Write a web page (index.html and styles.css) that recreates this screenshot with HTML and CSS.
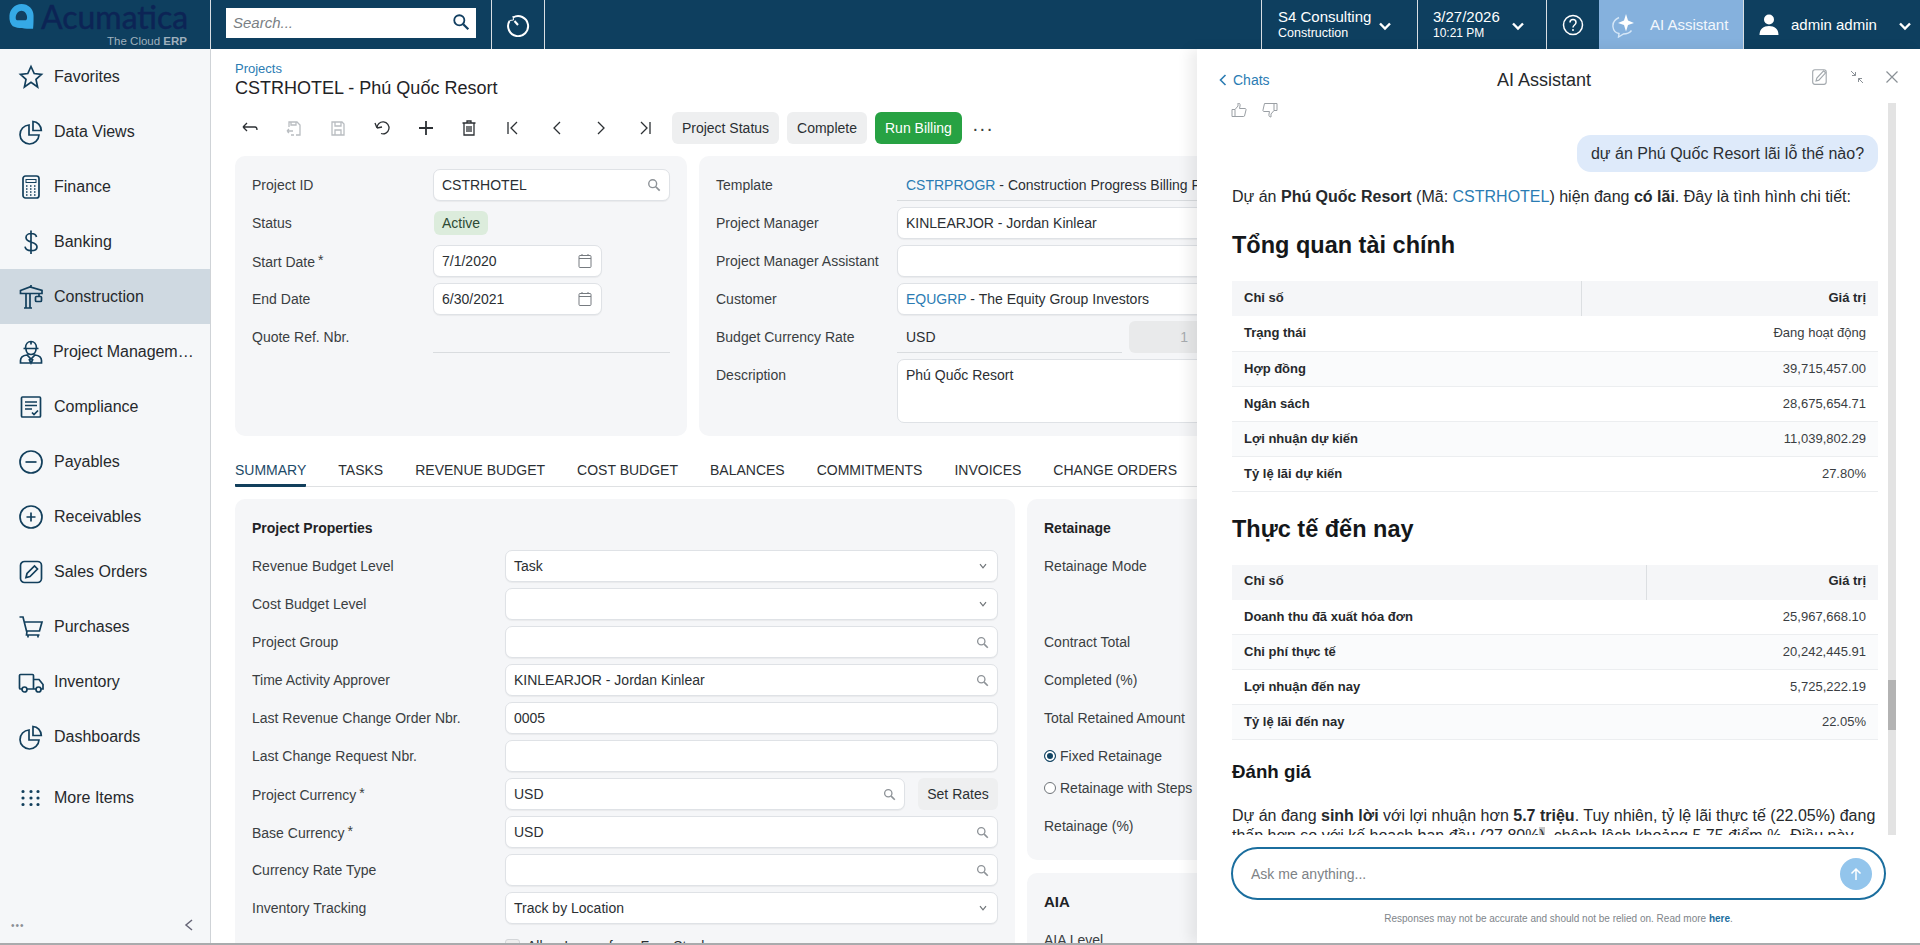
FILE: index.html
```html
<!DOCTYPE html>
<html lang="vi">
<head>
<meta charset="utf-8">
<title>CSTRHOTEL - Phú Quốc Resort</title>
<link rel="stylesheet" href="styles.css">
</head>
<body>
<svg class="defs" width="0" height="0" aria-hidden="true">
  <symbol id="mag" viewBox="0 0 16 16"><circle cx="6.5" cy="6.5" r="4.5" fill="none" stroke="currentColor" stroke-width="1.6"/><path d="M10 10l4.5 4.5" stroke="currentColor" stroke-width="2" fill="none"/></symbol>
  <symbol id="chev" viewBox="0 0 16 16"><path d="M3 5.5l5 5 5-5" fill="none" stroke="currentColor" stroke-width="2.4"/></symbol>
  <symbol id="small-chev" viewBox="0 0 10 10"><path d="M2.500 3.500l2.500 3 2.500-3" fill="none" stroke="currentColor" stroke-width="1"/></symbol>
  <symbol id="cal" viewBox="0 0 16 16"><rect x="2" y="2.5" width="12" height="12" rx="1" fill="none" stroke="currentColor"/><path d="M2 5.5h12M5 1v2M11 1v2" stroke="currentColor" fill="none"/></symbol>
</svg>
<div class="app">
  <header class="topbar">
    <div class="logo">
      <svg class="logo-mark" viewBox="0 0 28 28"><path d="M14 1C7 1 2 6.500 1.500 13c-.4 5 1 9 3.500 11 6 2.500 12 2.500 21 2.800 .6-6 .5-10 .5-13.800C26.500 6 21 1 14 1z" fill="#35a9e6"/><path d="M14 8c-3 0-5.500 3-6 6.500-.2 2 .4 3 1.500 3.500h9c1-.6 1.500-2 1.200-4C19.500 11 17 8 14 8z" fill="#123f61"/></svg>
      <div class="logo-text">
        <div class="logo-name">Acumatica</div>
        <div class="logo-sub">The Cloud <b>ERP</b></div>
      </div>
    </div>
    <div class="search-wrap">
      <div class="search"><span class="search-ph">Search...</span><svg class="search-ic"><use href="#mag"/></svg></div>
    </div>
    <div class="tb-cell tb-clock">
      <svg width="24" height="24" viewBox="0 0 24 24" fill="none" stroke="#fff" stroke-width="2"><path d="M7 4.500A10 10 0 1 1 3.500 8"/><path d="M7 3l.5 4-4 .5" stroke-width="1"/><path d="M12 12L8.500 8" stroke-width="2"/></svg>
    </div>
    <div class="tb-fill"></div>
    <div class="tb-cell tb-company">
      <div class="two-line"><div class="l1">S4 Consulting</div><div class="l2">Construction</div></div>
      <svg class="tb-chev"><use href="#chev"/></svg>
    </div>
    <div class="tb-cell tb-date">
      <div class="two-line"><div class="l1">3/27/2026</div><div class="l2">10:21 PM</div></div>
      <svg class="tb-chev"><use href="#chev"/></svg>
    </div>
    <div class="tb-cell tb-help">
      <svg width="22" height="22" viewBox="0 0 22 22" fill="none" stroke="#fff"><circle cx="11" cy="11" r="9.500" stroke-width="1.500"/><path d="M8 8.500c0-4 6-4 6 0 0 2.500-3 2.500-3 5" stroke-width="1.500"/><circle cx="11" cy="16" r=".6" fill="#fff"/></svg>
    </div>
    <div class="tb-cell tb-ai">
      <svg width="26" height="26" viewBox="0 0 26 26" fill="none"><path d="M8 5.500C3.500 7.500 1.500 11 2 15c.5 4 3 6 6 6.500l-.5 3.500 5-3c3 0 6-1 8-3.500" stroke="#d6e7f7" stroke-width="1.400"/><path d="M15 2l2 6.500L23 11l-6 2-2 6.500-2-6.500-6-2 6-2.500z" fill="#fff"/></svg>
      <span>AI Assistant</span>
    </div>
    <div class="tb-cell tb-user">
      <svg width="24" height="24" viewBox="0 0 24 24" fill="#fff"><circle cx="12" cy="6.500" r="5"/><path d="M2.500 22c0-6 4-9 9.500-9s9.500 3 9.500 9z"/></svg>
      <span class="user-name">admin admin</span>
      <svg class="tb-chev"><use href="#chev"/></svg>
    </div>
  </header>

  <div class="body">
    <nav class="sidebar">
      <a class="nav"><svg class="nic" viewBox="0 0 26 26"><path d="M13 2.500l3.200 7 7.300.8-5.500 5 1.600 7.700L13 18.200 6.400 23l1.600-7.700-5.500-5 7.300-.8z"/></svg><span>Favorites</span></a>
      <a class="nav"><svg class="nic" viewBox="0 0 26 26"><path d="M11 6A9.500 9.500 0 1 0 21 16H11z"/><path d="M15 2.500c4.500.3 8 3.800 8.300 9H15z"/></svg><span>Data Views</span></a>
      <a class="nav"><svg class="nic" viewBox="0 0 26 26"><rect x="5" y="2" width="16" height="22" rx="2.500"/><rect x="8" y="5.500" width="10" height="3" stroke-width="1"/><path class="dots" d="M8 12h1.500M12 12h1.500M16 12h1.500M8 15h1.500M12 15h1.500M16 15h1.500M8 18h1.500M12 18h1.500M16 18h1.500M8 21h1.500M12 21h1.500M16 21h1.500"/></svg><span>Finance</span></a>
      <a class="nav"><svg class="nic" viewBox="0 0 26 26"><path d="M18.500 8c-.5-2.500-3-3.500-5.500-3.500S8 6 8 8.500c0 6 11 3.500 11 9.500 0 2.500-3 3.700-6 3.700s-5.500-1.500-6-4M13 1.500v23.500"/></svg><span>Banking</span></a>
      <a class="nav active"><svg class="nic" viewBox="0 0 26 26"><path d="M2.500 6.500L12 3l12 3.500v3h-21.500zM8 9.500v14M12 9.500v14M6 24h8M13 3V1M21 9.500v3"/><rect x="17.500" y="12.500" width="6" height="5" rx="1"/></svg><span>Construction</span></a>
      <a class="nav"><svg class="nic" viewBox="0 0 26 26"><path d="M7.500 9c0-4 2.500-6.500 5.500-6.500S18.500 5 18.500 9M5.500 9.500h15M8 10c0 3 2 5.500 5 5.500s5-2.500 5-5.500M2.500 24v-2.500c0-3 3-5 6.500-5.500l4 4 4-4c3.500.5 6.500 2.500 6.500 5.500V24zM13 2.500v3M11 20l2 4 2-4"/></svg><span class="nav-clip">Project Managem…</span></a>
      <a class="nav"><svg class="nic" viewBox="0 0 26 26"><rect x="3.500" y="3" width="19" height="20" rx="1"/><path d="M7 8h12M7 11.500h12M7 15h7M14 18.500l2 2 4-4"/></svg><span>Compliance</span></a>
      <a class="nav"><svg class="nic" viewBox="0 0 26 26"><circle cx="13" cy="13" r="11"/><path d="M7.500 13h11"/></svg><span>Payables</span></a>
      <a class="nav"><svg class="nic" viewBox="0 0 26 26"><circle cx="13" cy="13" r="11"/><path d="M8.500 13h9M13 8.500v9"/></svg><span>Receivables</span></a>
      <a class="nav"><svg class="nic" viewBox="0 0 26 26"><rect x="2.500" y="2.500" width="21" height="21" rx="4"/><path d="M8 18.500l1-4 7.500-7.500 3 3-7.500 7.500z"/></svg><span>Sales Orders</span></a>
      <a class="nav"><svg class="nic" viewBox="0 0 26 26"><path d="M1.500 3H5l3.500 14h13L24 8H7M9 17l-.5 4h13M10 21v2.500M20 21v2.500"/></svg><span>Purchases</span></a>
      <a class="nav"><svg class="nic" viewBox="0 0 26 26"><path d="M4 20H2.500c-.6 0-1-.5-1-1V6.500c0-.6.4-1 1-1h12c.6 0 1 .4 1 1V20H9M15.500 10.500H21l4 5V20h-2M18 20h-2.500"/><circle cx="6.500" cy="20.500" r="2.500"/><circle cx="20.500" cy="20.500" r="2.500"/></svg><span>Inventory</span></a>
      <a class="nav"><svg class="nic" viewBox="0 0 26 26"><path d="M11 6A9.500 9.500 0 1 0 21 16H11z"/><path d="M15 2.500c4.500.3 8 3.800 8.300 9H15z"/></svg><span>Dashboards</span></a>
      <a class="nav nav-more"><svg class="nic" viewBox="0 0 26 26"><path class="gdots" d="M5 6.500h.01M13 6.500h.01M20 6.500h.01M5 13h.01M13 13h.01M20 13h.01M5 19.500h.01M13 19.500h.01M20 19.500h.01"/></svg><span>More Items</span></a>
      <div class="side-foot">
        <span class="side-dots">•••</span>
        <svg width="12" height="12" viewBox="0 0 12 12" fill="none" stroke="#667" stroke-width="1.500"><path d="M9 1L3 6l6 5"/></svg>
      </div>
    </nav>

    <main class="content">
      <div class="crumb">Projects</div>
      <h1 class="title">CSTRHOTEL - Phú Quốc Resort</h1>
      <div class="toolbar">
        <button class="ti"><svg viewBox="0 0 18 18"><path d="M2 8h12c1 0 2 1 2 3M2 8l4-4M2 8l4 4"/></svg></button>
        <button class="ti off"><svg viewBox="0 0 18 18"><path d="M4 8V3h8l3 3v10h-4M6 3v3h5V3M2 12h6M2 12l2-2M2 12l2 2M6 16h3"/></svg></button>
        <button class="ti off"><svg viewBox="0 0 18 18"><path d="M3 3h10l2 2v11H3zM6 3v4h6V3M6 16v-5h6v5"/></svg></button>
        <button class="ti"><svg viewBox="0 0 18 18"><path d="M4 9a6 6 0 1 1 4 5.500M4 9L2 4M4 9l5-1"/></svg></button>
        <button class="ti strong"><svg viewBox="0 0 18 18"><path d="M9 2v14M2 9h14"/></svg></button>
        <button class="ti"><svg viewBox="0 0 18 18"><path d="M2.500 4h13M7 4V2h4v2M4 4v12h10V4M7 7v6M9 7v6M11 7v6"/></svg></button>
        <button class="ti"><svg viewBox="0 0 18 18"><path d="M4 3v12M13 3L7 9l6 6"/></svg></button>
        <button class="ti"><svg viewBox="0 0 18 18"><path d="M12 3L6 9l6 6"/></svg></button>
        <button class="ti"><svg viewBox="0 0 18 18"><path d="M6 3l6 6-6 6"/></svg></button>
        <button class="ti"><svg viewBox="0 0 18 18"><path d="M14 3v12M5 3l6 6-6 6"/></svg></button>
        <button class="btn">Project Status</button>
        <button class="btn">Complete</button>
        <button class="btn green">Run Billing</button>
        <span class="more">···</span>
      </div>

      <div class="top-cards">
        <section class="card card-a">
          <div class="row"><label>Project ID</label><div class="field w-full"><span>CSTRHOTEL</span><svg class="ic-mag"><use href="#mag"/></svg></div></div>
          <div class="row"><label>Status</label><span class="badge">Active</span></div>
          <div class="row"><label>Start Date <i>*</i></label><div class="field w-date"><span>7/1/2020</span><svg class="ic-cal"><use href="#cal"/></svg></div></div>
          <div class="row"><label>End Date</label><div class="field w-date"><span>6/30/2021</span><svg class="ic-cal"><use href="#cal"/></svg></div></div>
          <div class="row"><label>Quote Ref. Nbr.</label><div class="line w-full"></div></div>
        </section>
        <section class="card card-b">
          <div class="row"><label>Template</label><div class="line grow"><a>CSTRPROGR</a>&nbsp;- Construction Progress Billing Project Template</div></div>
          <div class="row"><label>Project Manager</label><div class="field grow"><span>KINLEARJOR - Jordan Kinlear</span></div></div>
          <div class="row"><label>Project Manager Assistant</label><div class="field grow"></div></div>
          <div class="row"><label>Customer</label><div class="field grow"><span><a>EQUGRP</a> - The Equity Group Investors</span></div></div>
          <div class="row"><label>Budget Currency Rate</label><div class="line w-rate">USD</div><div class="disabled">1</div></div>
          <div class="row row-tall"><label>Description</label><div class="area grow">Phú Quốc Resort</div></div>
        </section>
      </div>

      <div class="tabs">
        <span class="tab on">SUMMARY</span><span class="tab">TASKS</span><span class="tab">REVENUE BUDGET</span><span class="tab">COST BUDGET</span><span class="tab">BALANCES</span><span class="tab">COMMITMENTS</span><span class="tab">INVOICES</span><span class="tab">CHANGE ORDERS</span>
      </div>

      <div class="lower">
        <section class="card card-c">
          <h4>Project Properties</h4>
          <div class="row"><label>Revenue Budget Level</label><div class="field grow"><span>Task</span><svg class="ic-sc"><use href="#small-chev"/></svg></div></div>
          <div class="row"><label>Cost Budget Level</label><div class="field grow"><span></span><svg class="ic-sc"><use href="#small-chev"/></svg></div></div>
          <div class="row"><label>Project Group</label><div class="field grow"><span></span><svg class="ic-mag sm"><use href="#mag"/></svg></div></div>
          <div class="row"><label>Time Activity Approver</label><div class="field grow"><span>KINLEARJOR - Jordan Kinlear</span><svg class="ic-mag sm"><use href="#mag"/></svg></div></div>
          <div class="row"><label>Last Revenue Change Order Nbr.</label><div class="field grow"><span>0005</span></div></div>
          <div class="row"><label>Last Change Request Nbr.</label><div class="field grow"></div></div>
          <div class="row"><label>Project Currency <i>*</i></label><div class="field grow"><span>USD</span><svg class="ic-mag sm"><use href="#mag"/></svg></div><button class="btn setrates">Set Rates</button></div>
          <div class="row"><label>Base Currency <i>*</i></label><div class="field grow"><span>USD</span><svg class="ic-mag sm"><use href="#mag"/></svg></div></div>
          <div class="row"><label>Currency Rate Type</label><div class="field grow"><span></span><svg class="ic-mag sm"><use href="#mag"/></svg></div></div>
          <div class="row"><label>Inventory Tracking</label><div class="field grow"><span>Track by Location</span><svg class="ic-sc"><use href="#small-chev"/></svg></div></div>
          <div class="row"><label></label><span class="check"></span><span class="check-l">Allow Issues from Free Stock</span></div>
        </section>
        <div class="col-r">
          <section class="card card-d">
            <h4>Retainage</h4>
            <div class="row"><label>Retainage Mode</label></div>
            <div class="row"></div>
            <div class="row"><label>Contract Total</label></div>
            <div class="row"><label>Completed (%)</label></div>
            <div class="row"><label>Total Retained Amount</label></div>
            <div class="row radio-row"><span class="radio sel"></span><span>Fixed Retainage</span></div>
            <div class="row radio-row"><span class="radio"></span><span>Retainage with Steps</span></div>
            <div class="row"><label>Retainage (%)</label></div>
          </section>
          <section class="card card-d">
            <h4 class="h-big">AIA</h4>
            <div class="row"><label>AIA Level</label></div>
          </section>
        </div>
      </div>
    </main>
  </div>

  <aside class="chat">
    <div class="chat-head">
      <a class="chats"><svg width="8" height="12" viewBox="0 0 8 12" fill="none" stroke="#2b7cb3" stroke-width="1.600"><path d="M6.500 1L1.500 6l5 5"/></svg>Chats</a>
      <div class="chat-title">AI Assistant</div>
      <div class="chat-ctl">
        <svg width="18" height="18" viewBox="0 0 16 16" fill="none" stroke="#a2a8ad"><rect x="1.500" y="1.500" width="12" height="13" rx="2"/><path d="M4.500 11.500l.7-2.500 6-6.500 1.800 1.800-6 6.500z"/></svg>
        <svg width="14" height="14" viewBox="0 0 14 14" fill="none" stroke="#8a9096"><path d="M1 1l4.500 4.500M5.500 2v3.500H2M13 13L8.500 8.500M8.500 12V8.500H12"/></svg>
        <svg width="14" height="14" viewBox="0 0 14 14" fill="none" stroke="#8a9096" stroke-width="1.200"><path d="M1.500 1.500l11 11M12.500 1.500l-11 11"/></svg>
      </div>
    </div>
    <div class="chat-body">
      <div class="rate">
        <svg width="16" height="16" viewBox="0 0 16 16" fill="none" stroke="#9a9fa4"><path d="M1 7.500h3v7H1zM4 7.500l3-3.500V1c1.500 0 2.500 1 2 3l-.5 2.500H14c1 0 1.200 1 1 1.500l-1.500 6c-.2.500-.5.500-1 .5H4"/></svg>
        <svg width="16" height="16" viewBox="0 0 16 16" fill="none" stroke="#9a9fa4"><path d="M15 8.500h-3v-7h3zM12 8.500L9 12v3c-1.500 0-2.500-1-2-3l.5-2.500H2C1 9.500.8 8.500 1 8l1.500-6.500h9.500"/></svg>
      </div>
      <div class="bubble-row"><div class="bubble">dự án Phú Quốc Resort lãi lỗ thế nào?</div></div>
      <p class="p-first">Dự án <b>Phú Quốc Resort</b> (Mã: <a>CSTRHOTEL</a>) hiện đang <b>có lãi</b>. Đây là tình hình chi tiết:</p>
      <h2>Tổng quan tài chính</h2>
      <table class="tbl tbl-1">
        <thead><tr><th>Chỉ số</th><th>Giá trị</th></tr></thead>
        <tbody>
          <tr><td>Trạng thái</td><td>Đang hoạt động</td></tr>
          <tr><td>Hợp đồng</td><td>39,715,457.00</td></tr>
          <tr><td>Ngân sách</td><td>28,675,654.71</td></tr>
          <tr><td>Lợi nhuận dự kiến</td><td>11,039,802.29</td></tr>
          <tr><td>Tỷ lệ lãi dự kiến</td><td>27.80%</td></tr>
        </tbody>
      </table>
      <h2 class="h2-next">Thực tế đến nay</h2>
      <table class="tbl tbl-2">
        <thead><tr><th>Chỉ số</th><th>Giá trị</th></tr></thead>
        <tbody>
          <tr><td>Doanh thu đã xuất hóa đơn</td><td>25,967,668.10</td></tr>
          <tr><td>Chi phí thực tế</td><td>20,242,445.91</td></tr>
          <tr><td>Lợi nhuận đến nay</td><td>5,725,222.19</td></tr>
          <tr><td>Tỷ lệ lãi đến nay</td><td>22.05%</td></tr>
        </tbody>
      </table>
      <h3>Đánh giá</h3>
      <p class="p-last">Dự án đang <b>sinh lời</b> với lợi nhuận hơn <b>5.7 triệu</b>. Tuy nhiên, tỷ lệ lãi thực tế (22.05%) đang thấp hơn so với kế hoạch ban đầu (27.80%<mark>)</mark>, chênh lệch khoảng 5.75 điểm %. Điều này cho thấy chi phí thực tế cao hơn dự kiến.</p>
      <div class="sb-track"><div class="sb-thumb"></div></div>
    </div>
    <div class="chat-input">
      <span class="ph">Ask me anything...</span>
      <span class="send"><svg width="14" height="14" viewBox="0 0 14 14" fill="none" stroke="#fff" stroke-width="1.500"><path d="M7 13V2M2.500 6.500L7 2l4.500 4.500"/></svg></span>
    </div>
    <div class="disclaimer">Responses may not be accurate and should not be relied on. Read more <a>here</a>.</div>
  </aside>
</div>
</body>
</html>
```

FILE: styles.css
```css
* { box-sizing: border-box; }
html, body { margin: 0; height: 945px; overflow: hidden; background: #fff; }
body { font-family: "Liberation Sans", Arial, sans-serif; font-size: 14px; color: #2b2f33; }
.defs { position: absolute; }
.app { position: relative; height: 945px; display: flex; flex-direction: column; border-bottom: 2px solid #a9abad; overflow: hidden; }

/* top bar */
.topbar { height: 49px; flex: none; display: flex; background: #0e3f5f; color: #fff; }
.logo { width: 211px; flex: none; display: flex; border-right: 1px solid #d8dee3; padding: 3px 0 0 8px; position: relative; }
.logo-mark { width: 27px; height: 27px; flex: none; }
.logo-text { margin-left: 6px; width: 146px; }
.logo-name { font-family: Lato, sans-serif; font-size: 32px; line-height: 28px; color: #0c2455; font-weight: 400; -webkit-text-stroke: .4px #0c2455; }
.logo-sub { font-size: 11.500px; line-height: 14px; margin-top: 3px; color: #9fb0bd; text-align: right; }
.search-wrap { width: 280px; flex: none; padding: 8px 15px; }
.search { height: 30px; width: 250px; background: #fff; display: flex; align-items: center; justify-content: space-between; padding: 0 6px 2px 7px; }
.search-ph { font-style: italic; color: #7a7f84; font-size: 15px; }
.search-ic { width: 18px; height: 18px; color: #123f61; }
.tb-cell { height: 49px; flex: none; display: flex; align-items: center; border-left: 1px solid #d8dee3; }
.tb-clock { width: 54px; justify-content: center; border-right: 1px solid #d8dee3; }
.tb-fill { flex: 1; }
.tb-company { width: 156px; padding-left: 16px; gap: 6px; }
.tb-date { width: 129px; padding-left: 15px; gap: 0; justify-content: flex-start; }
.two-line { line-height: 14px; }
.l1 { font-size: 15px; line-height: 17px; }
.l2 { font-size: 12.500px; line-height: 16px; }
.tb-date .two-line { width: 77px; }
.tb-date .l2 { font-size: 12px; }
.tb-chev { width: 16px; height: 16px; color: #fff; margin-top: 2px; }
.tb-help { width: 53px; justify-content: center; }
.tb-ai { width: 144px; background: #85b1dd; gap: 13px; padding-left: 12px; border-left: none; color: #f2f7fc; font-size: 15px; }
.tb-user { width: 177px; padding-left: 13px; gap: 10px; }
.user-name { width: 96px; white-space: nowrap; font-size: 15px; }

/* sidebar */
.body { flex: 1; min-height: 0; display: flex; }
.sidebar { width: 211px; flex: none; background: #f5f7f9; border-right: 1px solid #cfd3d7; display: flex; flex-direction: column; }
.nav { height: 55px; flex: none; display: flex; align-items: center; padding-left: 18px; gap: 10px; font-size: 16px; color: #26292c; }
.nav.active { background: #cfd9e1; }
.nav-more { margin-top: 6px; }
.nic { width: 26px; height: 26px; flex: none; fill: none; stroke: #123f5c; stroke-width: 1.700; }
.nic .dots { stroke-width: 1.600; }
.nic .gdots { stroke-width: 3.200; stroke-linecap: round; }
.nav-clip { white-space: nowrap; margin-left: -1px; letter-spacing: -.05px; }
.side-foot { margin-top: auto; height: 36px; display: flex; align-items: center; justify-content: space-between; padding: 0 15px 0 11px; }
.side-dots { color: #8a9095; font-size: 10px; letter-spacing: 1px; }

/* content */
.content { flex: 1; min-width: 0; padding: 12px 0 0 24px; overflow: hidden; }
.crumb { font-size: 13px; line-height: 16px; color: #2b7cb3; }
.title { margin: 1px 0 0; font-size: 18px; line-height: 21px; font-weight: 400; color: #1f2326; }
.toolbar { margin-top: 13px; height: 32px; display: flex; align-items: center; }
.ti { width: 43.900px; height: 32px; margin: 0 7px 0 -7px; padding: 0; border: 0; background: none; display: flex; align-items: center; justify-content: center; }
.ti svg { width: 18px; height: 18px; fill: none; stroke: #2c3034; stroke-width: 1.300; }
.ti.off svg { stroke: #b9bdc1; }
.ti.strong svg { stroke-width: 1.800; }
.ti + .btn { margin-left: -2px; }
.toolbar .btn { margin-right: 8px; }
.btn { height: 32px; border: 0; border-radius: 6px; background: #eeeff0; color: #2b2f33; font: 14px "Liberation Sans", Arial, sans-serif; padding: 0 10px; white-space: nowrap; }
.btn.green { background: #27a243; color: #fff; }
.more { font-size: 20px; line-height: 20px; color: #3b3f43; margin-left: 2px; letter-spacing: .5px; }
.top-cards { margin-top: 12px; display: flex; gap: 12px; width: 1660px; }
.card { background: #f5f6f8; border-radius: 10px; padding: 13px 17px; }
.card-a { width: 452px; height: 280px; flex: none; }
.card-b { flex: 1; height: 280px; }
.row { height: 32px; margin-bottom: 6px; display: flex; align-items: center; }
.row label { flex: none; color: #3a3e42; white-space: nowrap; }
.row label i { font-style: normal; font-size: 14px; vertical-align: 2px; margin-left: -1px; }
.card-a label { width: 181px; }
.card-b label { width: 181px; }
.field { height: 32px; background: #fff; border: 1px solid #dfe2e6; border-radius: 7px; display: flex; align-items: center; justify-content: space-between; padding: 0 8px; box-shadow: 0 1px 1px rgba(0,0,0,.05); white-space: nowrap; color: #2b2f33; }
.w-full { width: 237px; }
.w-date { width: 169px; }
.grow { flex: 1; min-width: 0; }
.line { height: 32px; border-bottom: 1px solid #d9dcdf; display: flex; align-items: center; padding: 0 9px; white-space: nowrap; }
.w-rate { width: 225px; flex: none; }
.disabled { width: 68px; height: 32px; margin-left: 7px; background: #e9eaeb; border-radius: 6px 0 0 6px; display: flex; align-items: center; justify-content: flex-end; padding-right: 9px; color: #a8acb0; }
.area { align-self: flex-start; height: 64px; background: #fff; border: 1px solid #dfe2e6; border-radius: 7px; padding: 7px 8px; }
.row-tall { height: 64px; align-items: flex-start; }
.row-tall label { margin-top: 8px; }
.badge { background: #dcecdc; border-radius: 6px; height: 24px; width: 54px; display: flex; align-items: center; justify-content: center; color: #2e4a34; font-size: 14px; margin-left: 1px; }
a { color: #2b7cb3; }
.ic-mag { width: 14px; height: 14px; color: #8d9297; flex: none; }
.ic-mag.sm { width: 13px; height: 13px; }
.ic-cal { width: 16px; height: 16px; color: #767b80; flex: none; }
.ic-sc { width: 12px; height: 12px; color: #6f7478; flex: none; }

/* tabs */
.tabs { margin-top: 18px; height: 33px; width: 1660px; display: flex; gap: 32px; border-bottom: 1px solid #dfe1e3; }
.tab { height: 33px; line-height: 32px; font-size: 14px; color: #2b2f33; position: relative; white-space: nowrap; }
.tab.on { color: #1d4a68; border-bottom: 3px solid #123f5c; border-radius: 0 0 1px 1px; }

/* lower */
.lower { margin-top: 12px; display: flex; gap: 12px; width: 1660px; align-items: flex-start; }
.card-c { width: 780px; flex: none; padding-top: 21px; }
.card-c label { width: 253px; }
h4 { margin: 0 0 14px; font-size: 14px; line-height: 16px; font-weight: 700; color: #1f2326; }
.h-big { font-size: 15px; }
.setrates { width: 80px; flex: none; margin-left: 13px; padding: 0; }
.check { width: 15px; height: 15px; border: 1px solid #d3d6d9; border-radius: 3px; background: #eee; flex: none; }
.check-l { margin-left: 7px; white-space: nowrap; }
.col-r { flex: 1; display: flex; flex-direction: column; gap: 13px; }
.card-d { padding-top: 21px; padding-bottom: 12px; }
.radio-row { margin-bottom: 0; gap: 4px; color: #3a3e42; }
.radio-row + .row:not(.radio-row) { margin-top: 6px; }
.radio { width: 12px; height: 12px; flex: none; border: 1px solid #6e7378; border-radius: 50%; background: #fff; }
.radio.sel { background: #124463; box-shadow: inset 0 0 0 2px #fff; border-color: #124463; }

/* chat */
.chat { position: absolute; top: 49px; left: 1197px; width: 723px; bottom: 0; background: #fff; display: flex; flex-direction: column; box-shadow: -8px 0 12px rgba(0,0,0,.07); }
.chat-head { height: 54px; flex: none; display: flex; align-items: center; padding: 8px 21px 0 22px; }
.chats { width: 60px; display: flex; align-items: center; gap: 6px; font-size: 14px; color: #2b7cb3; }
.chat-title { flex: 1; text-align: center; font-size: 18px; color: #26292c; }
.chat-ctl { width: 90px; display: flex; align-items: center; justify-content: space-between; padding-left: 2px; margin-top: -6px; }
.chat-body { height: 732px; flex: none; position: relative; overflow: hidden; padding: 0 42px 0 35px; font-size: 16px; line-height: 20px; color: #26292c; }
.rate { height: 15px; margin: -1px 0 0 -1px; display: flex; gap: 15px; }
.bubble-row { margin-top: 18px; display: flex; justify-content: flex-end; }
.bubble { width: 301px; height: 37px; background: #deeafa; border-radius: 14px; display: flex; align-items: center; justify-content: center; font-size: 16px; color: #2b2f33; white-space: nowrap; }
.chat-body p { margin: 0; }
.p-first { margin-top: 15px !important; }
.chat-body h2 { margin: 22px 0 20px; font-size: 23.500px; line-height: 32px; color: #14171a; }
.chat-body .h2-next { margin-top: 21px; }
.chat-body h3 { margin: 21px 0 23px; font-size: 18.720px; line-height: 22px; color: #14171a; }
.tbl { width: 646px; border-collapse: collapse; table-layout: fixed; font-size: 13px; line-height: 16px; }
.tbl th { height: 35px; background: #f5f6f8; font-weight: 700; text-align: left; padding: 0 12px 2px 12px; }
.tbl th + th { border-left: 1px solid #dcdfe2; text-align: right; }
.tbl td { height: 35px; padding: 0 12px; border-bottom: 1px solid #eceef0; }
.tbl td:first-child { font-weight: 700; }
.tbl td + td { text-align: right; color: #3a3e42; }
.tbl tbody tr:nth-child(even) { background: #fafbfc; }
.tbl-1 th:first-child { width: 349px; }
.tbl-2 th:first-child { width: 414px; }
mark { background: #c9c9c9; color: inherit; }
.sb-track { position: absolute; top: 0; bottom: 0; right: 24px; width: 8px; background: #e3e3e3; }
.sb-thumb { position: absolute; left: 0; right: 0; top: 577px; height: 50px; background: #b3b3b3; }
.chat-input { margin: 12px 34px 0 34px; height: 53px; flex: none; border: 2px solid #1b6e9e; border-radius: 27px; display: flex; align-items: center; justify-content: space-between; padding: 0 12px 0 18px; }
.ph { color: #7d8286; font-size: 14px; }
.send { width: 32px; height: 32px; border-radius: 50%; background: #93c5ec; display: flex; align-items: center; justify-content: center; }
.disclaimer { margin-top: 13px; text-align: center; font-size: 10px; line-height: 12px; color: #80858a; }
.disclaimer a { color: #1b6e9e; font-weight: 700; }
```
